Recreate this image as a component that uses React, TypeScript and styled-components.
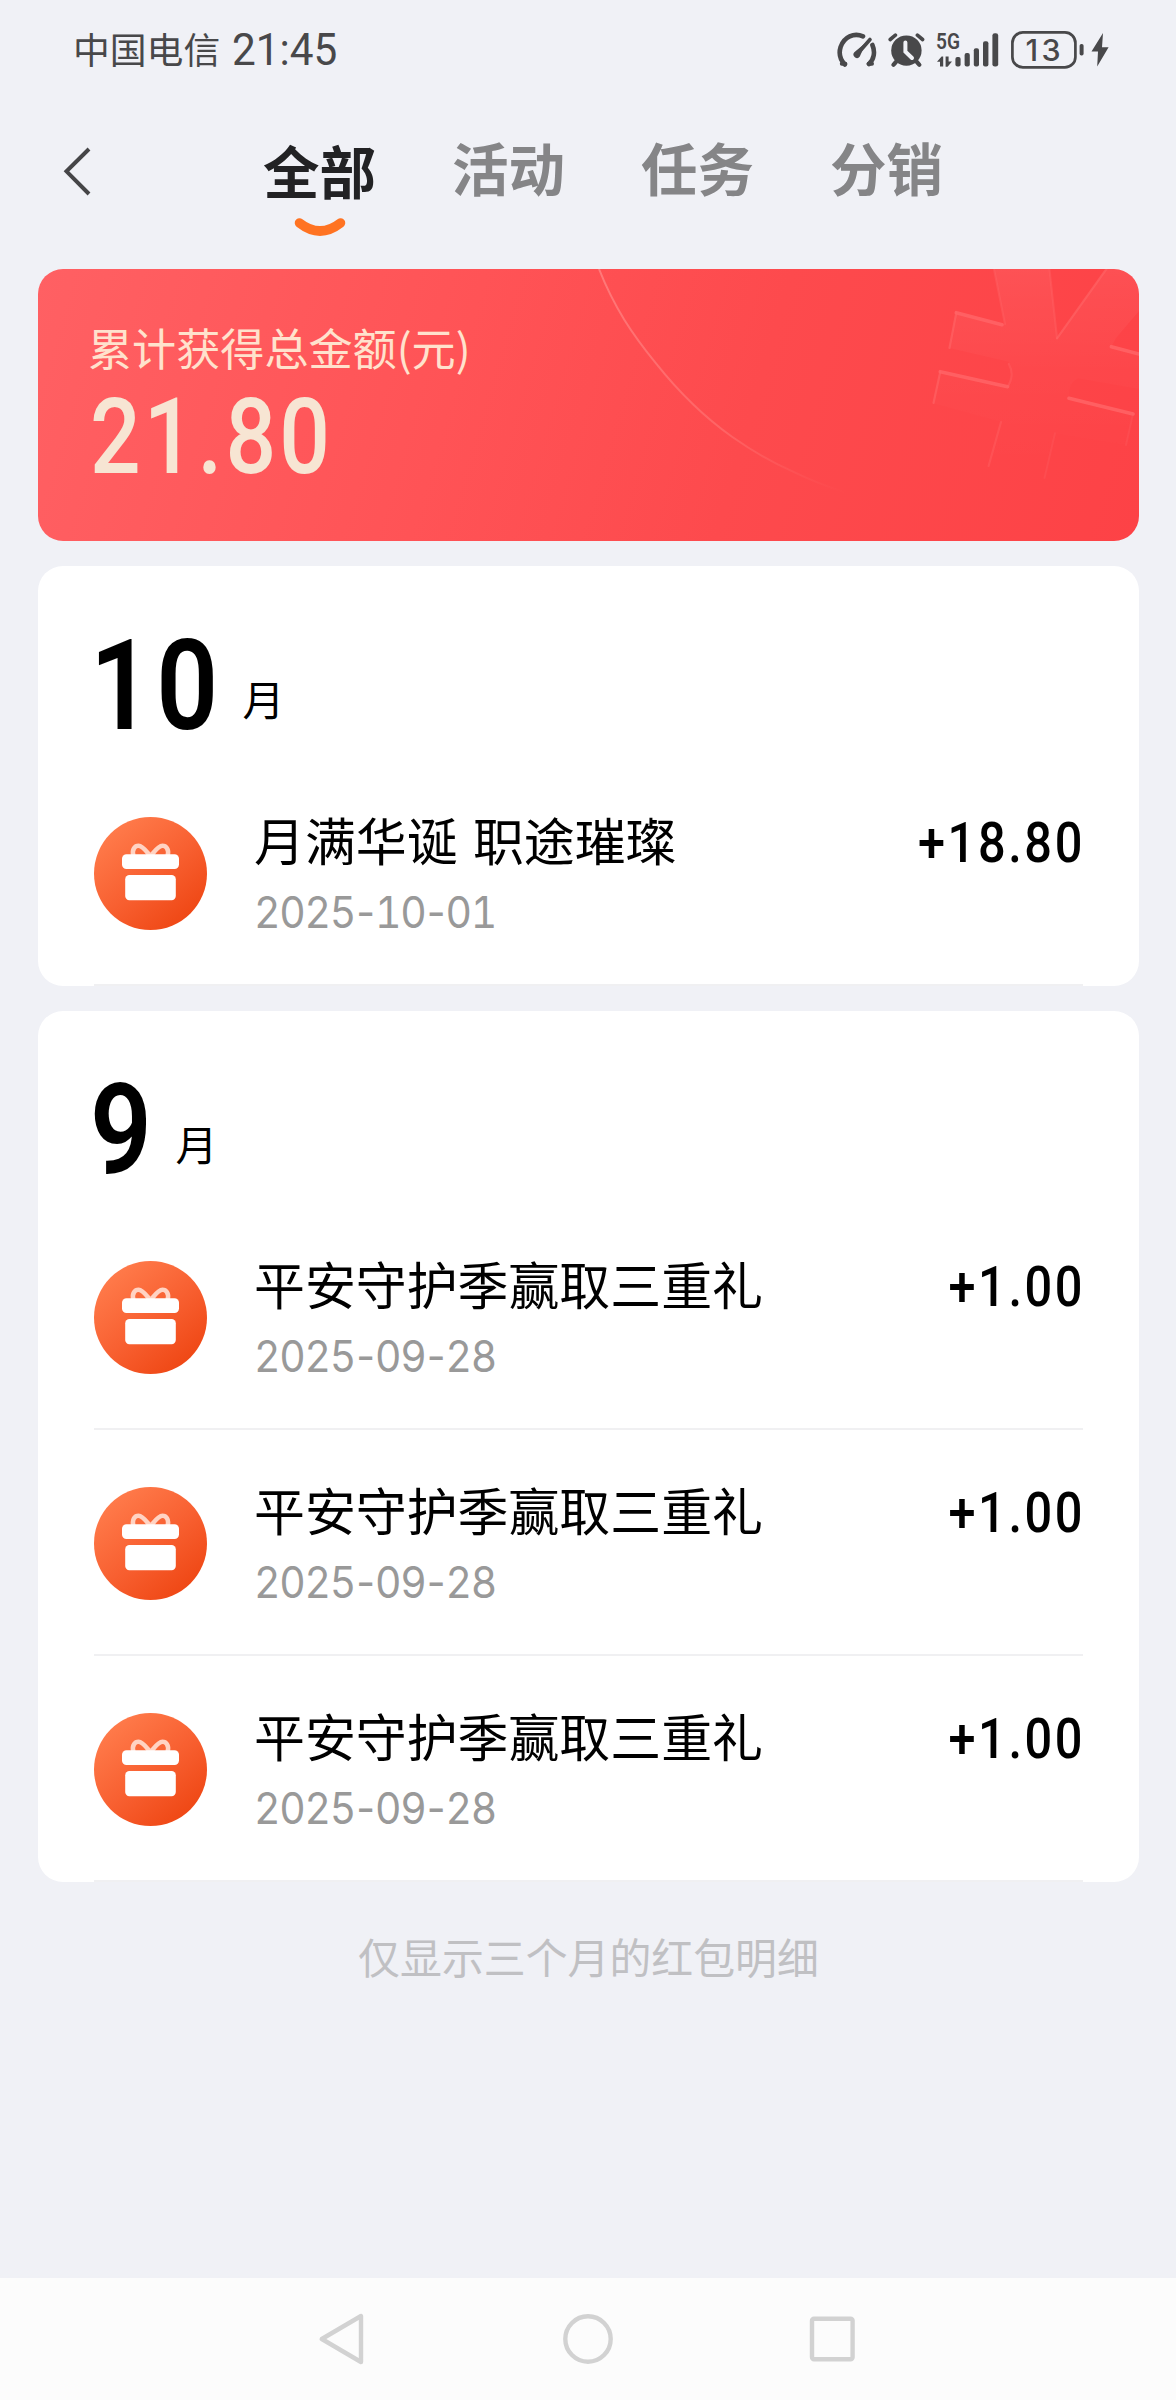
import React from 'react';
import styled, { createGlobalStyle } from 'styled-components';

const CJK = `'Noto Sans CJK SC', 'Noto Sans', sans-serif`;
const DIGIT = `Roboto, 'Noto Sans CJK SC', sans-serif`;

const GlobalStyle = createGlobalStyle`
  * { box-sizing: border-box; }
  body { margin: 0; background: #f0f1f6; }
`;

const Screen = styled.div`
  display: flex;
  flex-direction: column;
  width: 1176px;
  height: 2400px;
  overflow: hidden;
  background: #f0f1f6;
  font-family: ${CJK};
  color: #000;
`;

const Scaled = styled.span<{ $x: number; $origin?: string }>`
  display: inline-block;
  transform: scaleX(${(p) => p.$x});
  transform-origin: ${(p) => p.$origin ?? 'left'} center;
  white-space: nowrap;
`;

const StatusBar = styled.header`
  display: flex;
  align-items: center;
  height: 100px;
  padding: 0 67px 0 73px;
  color: #48484a;
`;

const Carrier = styled.span`
  font-size: 36.8px;
  line-height: 60px;
  margin-top: -5px;
`;

const Clock = styled.span`
  flex: 1;
  margin-left: 12px;
  font-family: ${DIGIT};
  font-size: 45px;
  line-height: 60px;
`;

const StatusIcons = styled.div`
  display: flex;
  align-items: center;
  gap: 11px;
`;

const TopNav = styled.nav`
  display: flex;
  align-items: flex-start;
  height: 169px;
  padding-left: 59px;
`;

const BackButton = styled.button`
  display: flex;
  width: 36px;
  height: 56px;
  margin: 43px 168px 0 0;
  padding: 0;
  border: 0;
  background: none;
`;

const Tabs = styled.div`
  display: flex;
  gap: 76px;
`;

const Tab = styled.div<{ $active?: boolean }>`
  display: flex;
  flex-direction: column;
  align-items: center;
  padding-top: ${(p) => (p.$active ? 29 : 25.5)}px;
  font-size: 56.5px;
  line-height: 80px;
  font-weight: 700;
  color: ${(p) => (p.$active ? '#222224' : '#858587')};
`;

const Smile = styled.svg`
  display: block;
  width: 52px;
  height: 20px;
  margin-top: 7.5px;
`;

const Content = styled.main`
  display: flex;
  flex-direction: column;
  flex: 1;
  padding: 0 37px 0 38px;
`;

const TotalCard = styled.section`
  position: relative;
  height: 272px;
  padding: 48px 50px 0;
  border-radius: 25px;
  overflow: hidden;
  background: linear-gradient(106deg, #ff6063 0%, #ff5356 38%, #fd4a4d 64%, #fd4246 100%);
`;

const CardArt = styled.svg`
  position: absolute;
  inset: 0;
`;

const TotalLabel = styled.div`
  position: relative;
  font-size: 44.1px;
  line-height: 60px;
  color: #ffe2cd;
`;

const TotalValue = styled.div`
  position: relative;
  margin: 5.5px 0 0 2px;
  font-family: ${DIGIT};
  font-size: 105px;
  line-height: 110px;
  font-weight: 500;
  letter-spacing: 3.6px;
  color: #f7e5d3;
`;

const MonthCard = styled.section`
  margin-top: 25px;
  padding: 0 56px;
  border-radius: 25px;
  background: #fff;
`;

const MonthHeader = styled.h2`
  display: flex;
  align-items: flex-start;
  height: 193.5px;
  margin: 0;
  padding-top: 59.5px;
`;

const MonthNumber = styled.span<{ $digits: number }>`
  width: ${(p) => p.$digits * 67}px;
  margin: 0 1px 0 -4px;
  font-family: ${DIGIT};
  font-size: 126px;
  line-height: 120px;
  font-weight: 600;
  letter-spacing: 5px;
`;

const MonthUnit = styled.span`
  margin: 42.5px 0 0 17.5px;
  font-size: 42px;
  line-height: 60px;
  font-weight: 400;
`;

const Row = styled.div`
  display: flex;
  align-items: flex-start;
  height: 226px;
  padding-top: 49px;
  border-bottom: 2px solid #f0f0f2;
`;

const GiftIcon = styled.svg`
  flex: none;
  width: 113px;
  height: 113px;
  margin-top: 8px;
`;

const RowText = styled.div`
  flex: 1;
  margin-left: 47px;
`;

const RowTitle = styled.div`
  font-size: 50.9px;
  line-height: 60px;
  word-spacing: 4px;
`;

const RowDate = styled.div`
  margin: 18px 0 0;
  font-family: Inter, Roboto, sans-serif;
  font-size: 44px;
  line-height: 50px;
  letter-spacing: -1.4px;
  font-variant-numeric: tabular-nums;
  color: #999;
`;

const DateDash = styled.span`
  margin: 0 1.4px;
  font-variant-numeric: normal;
`;

const Amount = styled.div`
  margin: 4px -2px 0 0;
  font-family: ${DIGIT};
  font-size: 56px;
  line-height: 60px;
  font-weight: 500;
  letter-spacing: 3px;
`;

const Notice = styled.p`
  margin: 44px 0 0;
  font-size: 41.9px;
  line-height: 60px;
  text-align: center;
  color: #c0c0c3;
`;

const SystemNav = styled.footer`
  display: flex;
  justify-content: center;
  align-items: center;
  gap: 191px;
  height: 122px;
  background: #fcfcfc;
`;

const BoltIcon = styled.svg`
  margin-left: -5px;
`;

const Gauge = () => (
  <svg width="40" height="36" viewBox="0 0 40 36" fill="none" stroke="#48484a" strokeWidth="4.6" strokeLinecap="round">
    <path d="M7.8 32.5 C3 27.5 1.6 21.5 3.6 15 C7 5 17 .2 26 4.4" />
    <path d="M4.8 31.7 L8.4 31.7 M31.6 31.7 L35 31.7" strokeWidth="4" />
    <path d="M35.4 13 C38.4 20 37 27.5 32 32" />
    <path d="M33 7.5 L20.6 21.8" strokeWidth="3.6" />
    <path d="M29 10.5 L17.3 20.2 A3.4 3.4 0 1 0 22.8 24.6 Z" fill="#48484a" stroke="none" />
  </svg>
);

const Alarm = () => (
  <svg width="37" height="36" viewBox="0.6 0 37 36" fill="none" stroke="#48484a" strokeLinecap="round">
    <circle cx="19" cy="18.6" r="15.2" fill="#48484a" stroke="none" />
    <path d="M2.8 7.5 L8 3.2 M30 3.2 L35.2 7.5" strokeWidth="3.6" />
    <path d="M8.5 30 L6 32.8 M29.5 30 L32 32.8" strokeWidth="4.2" />
    <path d="M18 10.6 V19.6 L24.6 26" stroke="#f0f1f6" strokeWidth="4" />
  </svg>
);

const Signal = () => (
  <svg width="64" height="52" viewBox="0 -8 64 52" fill="#48484a">
    <text x="0" y="17.2" fontFamily="Roboto, sans-serif" fontSize="22.5" fontWeight="600" textLength="24" lengthAdjust="spacingAndGlyphs">5G</text>
    <path d="M1 29.8 L5.6 24.5 H7.2 V34.6 H4 V29.8 Z M16 29.6 L11.6 34.8 H9.6 V24.5 H12.6 V29.6 Z" />
    <rect x="19.4" y="25" width="5.2" height="9.6" rx="2" />
    <rect x="28.6" y="21" width="5.2" height="13.6" rx="2" />
    <rect x="37.8" y="16.2" width="5.2" height="18.4" rx="2" />
    <rect x="47" y="9.2" width="5.4" height="25.4" rx="2" />
    <rect x="56.4" y="1.2" width="5.8" height="33.4" rx="2.4" />
  </svg>
);

const Battery = () => (
  <svg width="74" height="38" viewBox="0 0 74 38" fill="none" stroke="#48484a">
    <rect x="1.4" y="1.4" width="63" height="35" rx="10.5" strokeWidth="2.7" />
    <rect x="68.6" y="13" width="4" height="11.6" rx="1.8" fill="#48484a" stroke="none" />
    <text x="32" y="30" textAnchor="middle" fontFamily="Inter, sans-serif" fontSize="30.5" fontWeight="500" textLength="35" fill="#48484a" stroke="none">13</text>
  </svg>
);

const Bolt = () => (
  <BoltIcon width="18" height="36" viewBox="0 0 18 36" fill="#48484a">
    <path d="M12 1 L.5 19.6 H7 L6.2 34.6 L17.6 15.2 H11 Z" />
  </BoltIcon>
);

const Gift = () => (
  <GiftIcon viewBox="0 0 113 113">
    <defs>
      <linearGradient id="gift" x1="0.15" y1="0.1" x2="0.85" y2="0.95">
        <stop offset="0" stopColor="#ff7b4b" />
        <stop offset="0.5" stopColor="#f86031" />
        <stop offset="1" stopColor="#ee4512" />
      </linearGradient>
    </defs>
    <circle cx="56.5" cy="56.5" r="56.5" fill="url(#gift)" />
    <g fill="none" stroke="#ffd3c3" strokeWidth="4.6" strokeLinecap="round">
      <path d="M39.2 38 C38 32 40.8 28.8 44.6 28.8 C48.6 28.8 52.6 34.6 56.2 38.8" />
      <path d="M73.8 38 C75 32 72.2 28.8 68.4 28.8 C64.4 28.8 60.4 34.6 56.8 38.8" />
    </g>
    <rect x="28" y="37.3" width="57" height="14.8" rx="4.5" fill="#fff" />
    <rect x="31.2" y="58" width="50.6" height="25.3" rx="4.2" fill="#fff" />
  </GiftIcon>
);

const YuanArt = () => (
  <CardArt width="1101" height="272" viewBox="0 0 1101 272" fill="none">
    <defs>
      <linearGradient id="arc" x1="561" y1="0" x2="808" y2="224" gradientUnits="userSpaceOnUse">
        <stop offset="0" stopColor="#ff8080" stopOpacity="0.85" />
        <stop offset="0.6" stopColor="#ff7474" stopOpacity="0.6" />
        <stop offset="1" stopColor="#ff6666" stopOpacity="0" />
      </linearGradient>
      <linearGradient id="face" x1="0" y1="0" x2="0" y2="200" gradientUnits="userSpaceOnUse">
        <stop offset="0" stopColor="#fff" stopOpacity="0.065" />
        <stop offset="0.5" stopColor="#fff" stopOpacity="0.018" />
        <stop offset="1" stopColor="#fff" stopOpacity="0" />
      </linearGradient>
    </defs>
    <path d="M561 0 C576 38 594 65 618 94.3 C640 122 665 147 694 167.7 C713 181 733 193 755 202.7 C772 211 790 218 808 223.7" stroke="url(#arc)" strokeWidth="2" />
    <path
      d="M956 0 L967 55.5 L918.3 43.7 L911.5 79 L970.8 92.7 Q977 106 969.6 117.7 L902.3 102.7 L895.5 134.3 L963 152.7 L950.6 197.7 L1006.5 209.3 L1017 164.3 L1088 176 L1095 145 L1031 129.3 Q1030 114 1040 109.3 L1101 120 V85 L1073.4 77.7 L1078 69 L1101 42 V0 H1068.4 L1019 69.3 L1011.4 0 Z"
      fill="url(#face)"
    />
    <g stroke="#ff6466" strokeWidth="2.6" strokeLinecap="round" strokeLinejoin="round">
      <path d="M918.3 43.7 L964 55.7 M902.3 102.7 L969.6 117.7 M1073.4 77.7 L1101 85 M1031 129.3 L1095 145" strokeWidth="3.6" strokeOpacity="0.85" />
      <path d="M918.3 43.7 L911.5 79 M902.3 102.7 L895.5 134 M1019 69.3 L1068.4 0" strokeOpacity="0.65" strokeWidth="2.2" />
      <path d="M956 0 L967 55 M1011.4 0 L1019 69 M963 153 L950.6 197 M969.6 117.7 Q977 106 970.8 95" strokeOpacity="0.4" strokeWidth="2.2" />
      <path d="M1017 164.3 L1006.5 209 M1095 145 L1088 176" strokeOpacity="0.25" strokeWidth="2" />
    </g>
  </CardArt>
);

type Entry = { title: string; date: string; amount: string };

const months: { month: string; entries: Entry[] }[] = [
  { month: '10', entries: [{ title: '月满华诞 职途璀璨', date: '2025-10-01', amount: '+18.80' }] },
  {
    month: '9',
    entries: Array.from({ length: 3 }, () => ({ title: '平安守护季赢取三重礼', date: '2025-09-28', amount: '+1.00' })),
  },
];

const tabs = ['全部', '活动', '任务', '分销'];

export default function App() {
  return (
    <Screen>
      <GlobalStyle />
      <StatusBar>
        <Carrier>中国电信</Carrier>
        <Clock>
          <Scaled $x={0.94}>21:45</Scaled>
        </Clock>
        <StatusIcons>
          <Gauge />
          <Alarm />
          <Signal />
          <Battery />
          <Bolt />
        </StatusIcons>
      </StatusBar>

      <TopNav>
        <BackButton aria-label="返回">
          <svg width="36" height="56" viewBox="0 0 36 56" fill="none">
            <path d="M30 6 L7.5 28.3 L30 51" stroke="#454547" strokeWidth="4" />
          </svg>
        </BackButton>
        <Tabs>
          {tabs.map((name, i) => (
            <Tab key={name} $active={i === 0}>
              {name}
              {i === 0 && (
                <Smile viewBox="0 0 52 20" fill="none">
                  <path d="M5.5 6 Q26 22 46.5 6" stroke="#ff7322" strokeWidth="9.5" strokeLinecap="round" />
                </Smile>
              )}
            </Tab>
          ))}
        </Tabs>
      </TopNav>

      <Content>
        <TotalCard>
          <YuanArt />
          <TotalLabel>累计获得总金额(元)</TotalLabel>
          <TotalValue>
            <Scaled $x={0.85}>21.80</Scaled>
          </TotalValue>
        </TotalCard>

        {months.map(({ month, entries }) => (
          <MonthCard key={month}>
            <MonthHeader>
              <MonthNumber $digits={month.length}>
                <Scaled $x={0.86}>{month}</Scaled>
              </MonthNumber>
              <MonthUnit>月</MonthUnit>
            </MonthHeader>
            {entries.map((entry, i) => (
              <Row key={i}>
                <Gift />
                <RowText>
                  <RowTitle>{entry.title}</RowTitle>
                  <RowDate>
                    <Scaled $x={0.93}>
                      {entry.date.split('-').map((part, n) => (
                        <React.Fragment key={n}>
                          {n > 0 && <DateDash>-</DateDash>}
                          {part}
                        </React.Fragment>
                      ))}
                    </Scaled>
                  </RowDate>
                </RowText>
                <Amount>
                  <Scaled $x={0.87} $origin="right">{entry.amount}</Scaled>
                </Amount>
              </Row>
            ))}
          </MonthCard>
        ))}

        <Notice>仅显示三个月的红包明细</Notice>
      </Content>

      <SystemNav>
        <svg width="52" height="56" viewBox="0 0 52 56" fill="none" stroke="#d2d2d2" strokeWidth="4.4" strokeLinejoin="round">
          <path d="M42 5 V51 L2.8 28 Z" />
        </svg>
        <svg width="52" height="56" viewBox="0 0 52 56" fill="none" stroke="#d2d2d2" strokeWidth="4.4">
          <circle cx="26" cy="28" r="22.7" />
        </svg>
        <svg width="52" height="56" viewBox="0 0 52 56" fill="none" stroke="#d2d2d2" strokeWidth="4.4">
          <rect x="7" y="7.7" width="40.6" height="40.6" rx="2" />
        </svg>
      </SystemNav>
    </Screen>
  );
}
